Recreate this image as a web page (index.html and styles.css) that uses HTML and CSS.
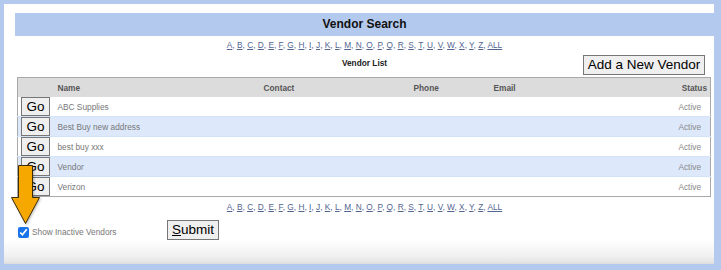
FILE: index.html
```html
<!DOCTYPE html>
<html>
<head>
<meta charset="utf-8">
<link rel="stylesheet" href="styles.css">
</head>
<body>
<div class="panel">
  <div class="titlebar">Vendor Search</div>
  <div class="letters">
    <a href="#">A</a>, <a href="#">B</a>, <a href="#">C</a>, <a href="#">D</a>, <a href="#">E</a>, <a href="#">F</a>, <a href="#">G</a>, <a href="#">H</a>, <a href="#">I</a>, <a href="#">J</a>, <a href="#">K</a>, <a href="#">L</a>, <a href="#">M</a>, <a href="#">N</a>, <a href="#">O</a>, <a href="#">P</a>, <a href="#">Q</a>, <a href="#">R</a>, <a href="#">S</a>, <a href="#">T</a>, <a href="#">U</a>, <a href="#">V</a>, <a href="#">W</a>, <a href="#">X</a>, <a href="#">Y</a>, <a href="#">Z</a>, <a href="#">ALL</a>
  </div>
  <div class="listbar">
    <span class="listtitle">Vendor List</span>
    <button class="btn addbtn">Add a New Vendor</button>
  </div>
  <table class="vendors">
    <colgroup>
      <col class="c-go"><col class="c-name"><col class="c-contact"><col class="c-phone"><col class="c-email"><col class="c-status">
    </colgroup>
    <thead>
      <tr><th></th><th>Name</th><th>Contact</th><th>Phone</th><th>Email</th><th class="st">Status</th></tr>
    </thead>
    <tbody>
      <tr><td class="go"><button class="btn gobtn">Go</button></td><td>ABC Supplies</td><td></td><td></td><td></td><td class="st">Active</td></tr>
      <tr class="alt"><td class="go"><button class="btn gobtn">Go</button></td><td>Best Buy new address</td><td></td><td></td><td></td><td class="st">Active</td></tr>
      <tr><td class="go"><button class="btn gobtn">Go</button></td><td>best buy xxx</td><td></td><td></td><td></td><td class="st">Active</td></tr>
      <tr class="alt"><td class="go"><button class="btn gobtn">Go</button></td><td>Vendor</td><td></td><td></td><td></td><td class="st">Active</td></tr>
      <tr><td class="go"><button class="btn gobtn">Go</button></td><td>Verizon</td><td></td><td></td><td></td><td class="st">Active</td></tr>
    </tbody>
  </table>
  <div class="letters bottom">
    <a href="#">A</a>, <a href="#">B</a>, <a href="#">C</a>, <a href="#">D</a>, <a href="#">E</a>, <a href="#">F</a>, <a href="#">G</a>, <a href="#">H</a>, <a href="#">I</a>, <a href="#">J</a>, <a href="#">K</a>, <a href="#">L</a>, <a href="#">M</a>, <a href="#">N</a>, <a href="#">O</a>, <a href="#">P</a>, <a href="#">Q</a>, <a href="#">R</a>, <a href="#">S</a>, <a href="#">T</a>, <a href="#">U</a>, <a href="#">V</a>, <a href="#">W</a>, <a href="#">X</a>, <a href="#">Y</a>, <a href="#">Z</a>, <a href="#">ALL</a>
  </div>
  <div class="formrow">
    <label class="inactive"><input type="checkbox" class="chk" checked> Show Inactive Vendors</label>
    <button class="btn submitbtn"><u>S</u>ubmit</button>
  </div>
  <svg class="arrow" width="34" height="64" viewBox="0 0 34 64">
    <polygon points="9.5,2.5 23.5,2.5 23.5,34.5 30.5,34.5 16.5,60.5 2.5,34.5 9.5,34.5" fill="#f6a800" stroke="#3b2c06" stroke-width="1" stroke-linejoin="round"/>
  </svg>
</div>
</body>
</html>
```
FILE: styles.css
```css
html, body {
  margin: 0;
  padding: 0;
}
body {
  background: #b3c9ed;
  font-family: "Liberation Sans", Arial, sans-serif;
  width: 721px;
  height: 270px;
  overflow: hidden;
}
.panel {
  position: relative;
  margin: 4px 0 0 4px;
  width: 699px;
  height: 251px;
  padding: 9px 0 0 11px;
  background: linear-gradient(to bottom, #ffffff 0, #ffffff 236px, #f0f0f0 252px, #e6e6e6 258px, #dcdcdc 260px);
}
.titlebar {
  height: 23px;
  line-height: 23px;
  background: #b3c9ed;
  text-align: center;
  font-weight: bold;
  font-size: 12px;
  color: #111;
}
.letters {
  margin-top: 4px;
  height: 10px;
  line-height: 10px;
  text-align: center;
  font-size: 8.3px;
  color: #52658f;
}
.letters a {
  color: #52658f;
  text-decoration: underline;
}
.letters.bottom {
  margin-top: 5px;
}
.listbar {
  margin-top: 5px;
  height: 20px;
  display: flex;
  justify-content: center;
  position: relative;
}
.listtitle {
  font-weight: bold;
  font-size: 8.3px;
  color: #222;
  line-height: 9px;
  margin-top: 4px;
}
.btn {
  font-family: "Liberation Sans", Arial, sans-serif;
  background: #efefef;
  border: 1px solid #767676;
  color: #000;
  padding: 0;
  margin: 0;
  cursor: pointer;
}
.addbtn {
  position: absolute;
  right: 9px;
  top: 0;
  height: 20px;
  width: 122px;
  font-size: 13.5px;
  line-height: 18px;
}
.vendors {
  margin: 2px 2px 0 2px;
  width: 694px;
  border-collapse: collapse;
  table-layout: fixed;
  border: 1px solid #a9a9a9;
  font-size: 8.3px;
}
.c-go { width: 34px; }
.c-name { width: 206px; }
.c-contact { width: 150px; }
.c-phone { width: 80px; }
.c-email { width: 100px; }
.vendors th {
  background: #dcdcdc;
  height: 19px;
  padding: 0 0 0 6px;
  text-align: left;
  font-weight: bold;
  color: #555;
}
.vendors th.st {
  text-align: right;
  padding-right: 3px;
}
.vendors td {
  height: 19px;
  padding: 0 0 0 6px;
  color: #777;
  white-space: nowrap;
}
.vendors td.st {
  text-align: right;
  padding-right: 9px;
  color: #888;
}
.vendors tbody tr + tr td {
  border-top: 1px solid #d4e2f6;
}
.vendors tr.alt td {
  background: #dde9fb;
}
.vendors td.go {
  padding: 0 0 0 3px;
  background: transparent;
}
.vendors tr.alt td.go {
  background: #dde9fb;
}
.gobtn {
  display: block;
  width: 29px;
  height: 19px;
  font-size: 13.5px;
  line-height: 17px;
}
.formrow {
  margin-top: 8px;
  height: 20px;
  display: flex;
  align-items: center;
}
.inactive {
  display: flex;
  align-items: center;
  margin-left: 3px;
  margin-top: 4px;
  font-size: 8.3px;
  color: #777;
  width: 149px;
}
.chk {
  width: 11px;
  height: 11px;
  margin: 0 3px 0 0;
  accent-color: #1a73e8;
}
.submitbtn {
  width: 52px;
  height: 20px;
  font-size: 13.5px;
  line-height: 18px;
}
.arrow {
  position: absolute;
  left: 5px;
  top: 159px;
  filter: drop-shadow(1px 1px 1px rgba(0,0,0,0.25));
}
```
